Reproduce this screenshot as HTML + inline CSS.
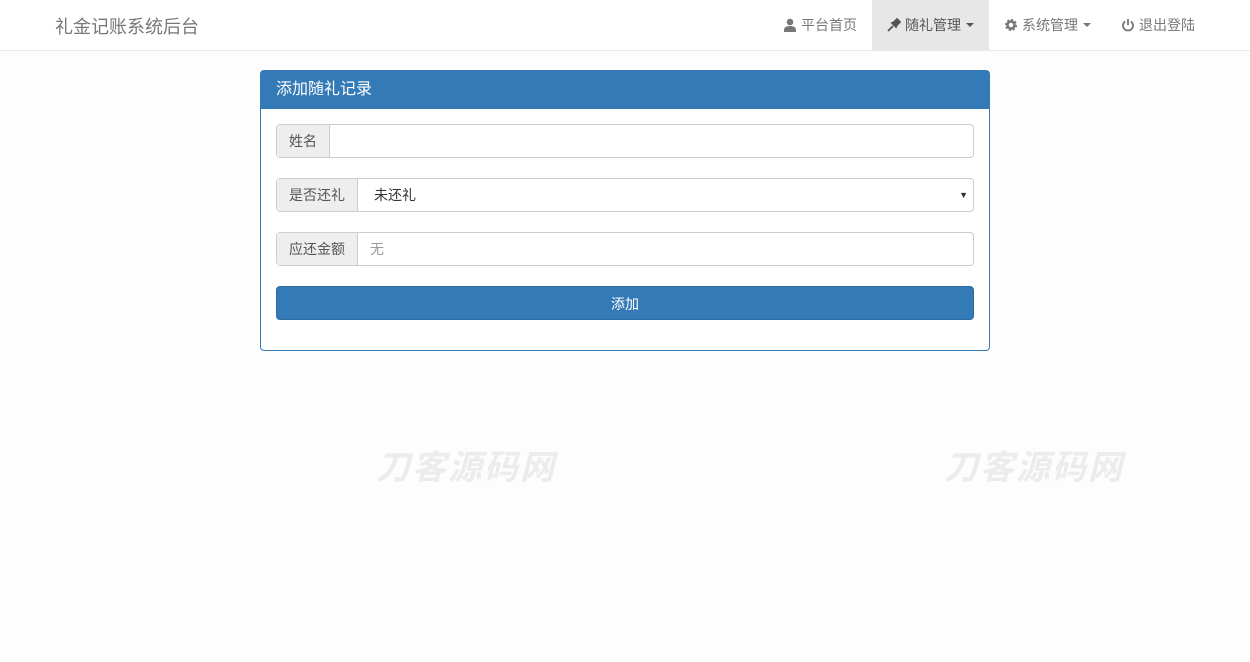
<!DOCTYPE html>
<html><head><meta charset="utf-8"><style>
body{margin:0;background:#fdfdfd;font-family:"Liberation Sans","Noto Sans CJK SC",sans-serif;font-size:14px;color:#333;width:1250px;height:662px;position:relative;overflow:hidden}
.nav{height:50px;background:#fff;border-bottom:1px solid #e7e7e7;position:relative}
.brand{position:absolute;left:55px;top:13px;font-size:18px;color:#777}
.menu{position:absolute;right:40px;top:0;display:flex;height:50px}
.menu div{padding:0 15px;line-height:50px;color:#777;font-size:14px;display:flex;align-items:center;gap:4px}
.menu .act{background:#e7e7e7;color:#555}
.caret{display:inline-block;border-top:4px solid #777;border-left:4px solid transparent;border-right:4px solid transparent;margin-left:1px}
.panel{position:absolute;left:260px;top:70px;width:728px;height:279px;border:1px solid #337ab7;border-radius:4px;background:#fff}
.ph{background:#337ab7;color:#fff;height:38px;line-height:38px;padding-left:15px;font-size:16px}
.grp{position:absolute;left:15px;width:696px;height:32px;border:1px solid #ccc;border-radius:4px;display:flex}
.ad{background:#eee;border-right:1px solid #ccc;padding:0 12px;line-height:32px;color:#555}
.in{flex:1;line-height:32px;padding-left:12px;color:#555;position:relative}
.btn{position:absolute;left:15px;top:215px;width:698px;height:34px;background:#337ab7;border-radius:4px;color:#fff;text-align:center;line-height:34px;border:1px solid #2e6da4;box-sizing:border-box}
.wm{position:absolute;top:440px;font-size:34px;font-weight:bold;font-style:italic;color:#ececec;letter-spacing:2px}
</style></head><body>
<div class="nav"><div class="brand">礼金记账系统后台</div>
<div class="menu">
<div><svg width="14" height="14" viewBox="0 0 14 14"><circle cx="7" cy="4" r="3.3" fill="#777"/><path d="M1 14v-2c0-3 3-4 6-4s6 1 6 4v2z" fill="#777"/></svg>平台首页</div>
<div class="act"><svg width="14" height="14" viewBox="0 0 14 14"><path d="M1 13l5-5M5 5l4 4 1-2 3-3-3-3-3 3-2 1z" stroke="#555" stroke-width="1.8" fill="#555"/></svg>随礼管理<span class="caret" style="border-top-color:#555"></span></div>
<div><svg width="14" height="14" viewBox="0 0 14 14"><circle cx="7" cy="7" r="4.5" fill="none" stroke="#777" stroke-width="3" stroke-dasharray="2 1.5"/><circle cx="7" cy="7" r="3.5" fill="none" stroke="#777" stroke-width="2.5"/></svg>系统管理<span class="caret"></span></div>
<div><svg width="14" height="14" viewBox="0 0 14 14"><path d="M4 3.5A5 5 0 1 0 10 3.5" fill="none" stroke="#777" stroke-width="1.8"/><path d="M7 1v6" stroke="#777" stroke-width="1.8"/></svg>退出登陆</div>
</div></div>
<div class="panel"><div class="ph">添加随礼记录</div>
<div class="grp" style="top:53px"><div class="ad">姓名</div><div class="in"></div></div>
<div class="grp" style="top:107px"><div class="ad">是否还礼</div><div class="in" style="padding-left:16px;color:#333">未还礼<span style="position:absolute;right:5px;font-size:9px">▼</span></div></div>
<div class="grp" style="top:161px"><div class="ad">应还金额</div><div class="in" style="color:#999">无</div></div>
<div class="btn">添加</div>
</div>
<div class="wm" style="left:376px">刀客源码网</div>
<div class="wm" style="left:944px">刀客源码网</div>
</body></html>
